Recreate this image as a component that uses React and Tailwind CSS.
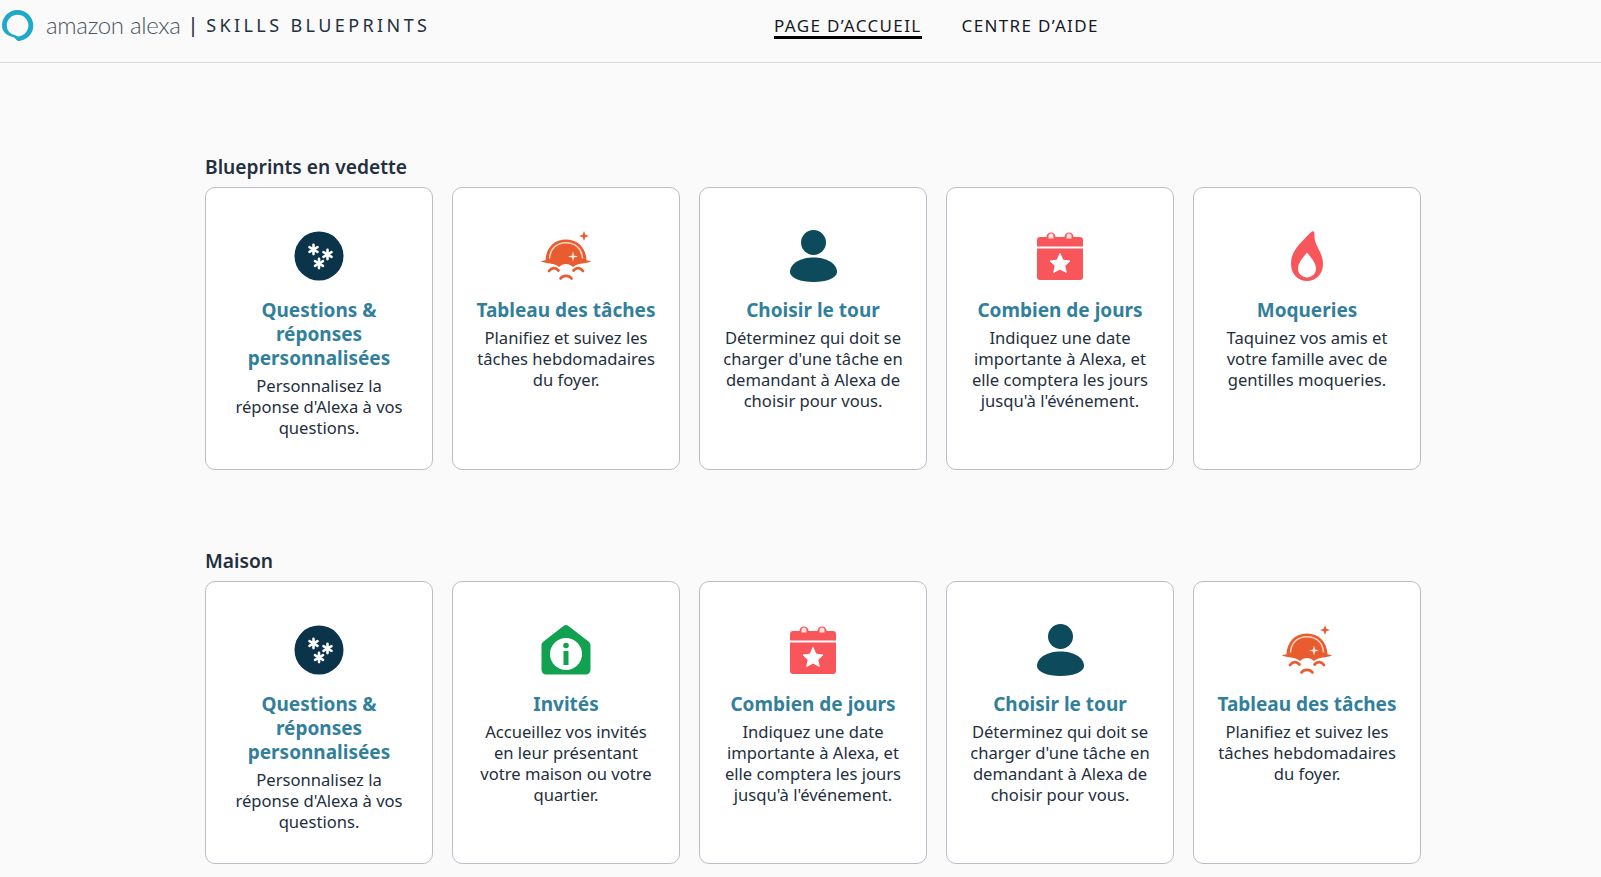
import React from 'react';

const FONT = "font-['Noto_Sans','Open_Sans',sans-serif]";

function AlexaLogo() {
  return (
    <svg width="33" height="33" viewBox="0 0 33 33" className="shrink-0">
      <path
        fillRule="evenodd"
        fill="#1fa9c9"
        d="M16.5 1C25.3 1 32.3 8 32.3 16.6C32.3 24.6 26.2 31.2 18.2 32C17 32.1 16.2 31.4 15.2 30.4L13.2 28.4C7.2 27.4 1 23.6 1 16.6C1 8 7.7 1 16.5 1ZM16.6 5.8C10.6 5.8 5.8 10.6 5.8 16.6C5.8 22 9.6 25.6 14.8 26.4L17.2 27.4C23 27 27.4 22.4 27.4 16.6C27.4 10.6 22.6 5.8 16.6 5.8Z"
      />
    </svg>
  );
}

function QnaIcon() {
  const flake = (x, y, k) => (
    <g key={k} stroke="#fff" strokeWidth="2.6" strokeLinecap="round">
      <path d={`M${x} ${y - 4.6}V${y + 4.6}`} />
      <path d={`M${x - 4} ${y - 2.3}L${x + 4} ${y + 2.3}`} />
      <path d={`M${x - 4} ${y + 2.3}L${x + 4} ${y - 2.3}`} />
    </g>
  );
  return (
    <svg width="50" height="50" viewBox="0 0 50 50">
      <circle cx="25" cy="25" r="24.5" fill="#0b3349" />
      {flake(19.5, 18.5, 'a')}
      {flake(33.5, 23.5, 'b')}
      {flake(25, 32.5, 'c')}
    </svg>
  );
}

function ChoresIcon() {
  const c = '#e85c30';
  return (
    <svg width="52" height="50" viewBox="0 0 52 50">
      <path d="M1 30.500C2 29.600 3.600 29.400 5.500 29.200C6 17 14 8.500 26 8.500C38 8.500 46 17 46.500 29.200C48.400 29.400 50 29.600 51 30.500C48 31.800 45 32 42 32.500C38 33 35 34 33 36C29 32 23 32 19 36C17 34 14 33 10 32.500C7 32 4 31.800 1 30.500Z" fill={c} />
      <path d="M9.500 27.500C10 18 16.500 11.700 26 11.700C35.500 11.700 42 18 42.500 27.500" fill="none" stroke="#fbd3bf" strokeWidth="1.500" />
      <path d="M33 20.500L34.100 24.400L38 25.500L34.100 26.600L33 30.500L31.900 26.600L28 25.500L31.900 24.400Z" fill="#fde8dc" />
      <path d="M44 0L45.300 3.700L49 5L45.300 6.300L44 10L42.700 6.300L39 5L42.700 3.700Z" fill={c} />
      <path d="M9 40C11.500 36.500 15.500 36 18.500 39.500M33.500 39.500C36.500 36 40.500 36.500 43 40M20.500 47.500C23 44 29 44 31.500 47.500" fill="none" stroke={c} strokeWidth="2.700" strokeLinecap="round" />
    </svg>
  );
}

function PersonIcon() {
  return (
    <svg width="50" height="52" viewBox="0 0 50 52">
      <circle cx="25.500" cy="12.500" r="12.500" fill="#0c4a5c" />
      <path d="M2 42C2 33.500 12.500 27.500 25.500 27.500C38.500 27.500 49 33.500 49 42C49 48 38.500 52 25.500 52C12.500 52 2 48 2 42Z" fill="#0c4a5c" />
    </svg>
  );
}

function CalendarIcon() {
  return (
    <svg width="46" height="48" viewBox="0 0 46 48">
      <path d="M3 5H9.500A4.500 4.500 0 0 1 18.500 5H27.500A4.500 4.500 0 0 1 36.500 5H43A3 3 0 0 1 46 8V14.500H0V8A3 3 0 0 1 3 5Z" fill="#f9565c" />
      <path d="M0 16.500H46V45A3 3 0 0 1 43 48H3A3 3 0 0 1 0 45Z" fill="#f9565c" />
      <path d="M11.500 6.500V4A2.500 2.500 0 0 1 16.500 4V6.500M29.500 6.500V4A2.500 2.500 0 0 1 34.500 4V6.500" fill="#fdd" />
      <path d="M23 21.500L26 28.200L33 29L27.800 33.700L29.300 40.500L23 37L16.700 40.500L18.200 33.700L13 29L20 28.200Z" fill="#fff" stroke="#fff" strokeLinejoin="round" />
    </svg>
  );
}

function FlameIcon() {
  return (
    <svg width="34" height="50" viewBox="0 0 34 50">
      <path
        fillRule="evenodd"
        fill="#f9565c"
        d="M22 0.500C23.500 0 24.500 1 24.500 2.500C24 8 25.500 12 28.500 18C31.500 23.500 33 28 33 33C33 43 26 50 17 50C8 50 1 43 1 33C1 24 5 18 11 11.500C15 7.500 18.500 3 22 0.500ZM17 21.500C13 26.500 8 32 8 37.500C8 43 12.500 46.500 17 46.500C21.500 46.500 26 43 26 37.500C26 32 21 26.500 17 21.500Z"
      />
    </svg>
  );
}

function GuestIcon() {
  return (
    <svg width="50" height="50" viewBox="0 0 50 50">
      <path d="M22.500 1C24 -0.200 26 -0.200 27.500 1L47.500 16.500C49 17.700 49.500 18.700 49.500 20.500V44.500C49.500 47.500 47.500 49.500 44.500 49.500H5.500C2.500 49.500 0.500 47.500 0.500 44.500V20.500C0.500 18.700 1 17.700 2.500 16.500Z" fill="#12a150" />
      <circle cx="25" cy="29" r="16" fill="#fff" />
      <circle cx="25" cy="20.500" r="2.800" fill="#12a150" />
      <path d="M22.500 26H27.500V40H22.500Z" fill="#12a150" />
    </svg>
  );
}

const ICONS = {
  qna: QnaIcon,
  chores: ChoresIcon,
  person: PersonIcon,
  calendar: CalendarIcon,
  flame: FlameIcon,
  guest: GuestIcon,
};

const CARDS = {
  qna: {
    icon: 'qna',
    title: 'Questions & réponses personnalisées',
    desc: "Personnalisez la réponse d'Alexa à vos questions.",
  },
  chores: {
    icon: 'chores',
    title: 'Tableau des tâches',
    desc: 'Planifiez et suivez les tâches hebdomadaires du foyer.',
  },
  turn: {
    icon: 'person',
    title: 'Choisir le tour',
    desc: "Déterminez qui doit se charger d'une tâche en demandant à Alexa de choisir pour vous.",
  },
  days: {
    icon: 'calendar',
    title: 'Combien de jours',
    desc: "Indiquez une date importante à Alexa, et elle comptera les jours jusqu'à l'événement.",
  },
  roast: {
    icon: 'flame',
    title: 'Moqueries',
    desc: 'Taquinez vos amis et votre famille avec de gentilles moqueries.',
  },
  guests: {
    icon: 'guest',
    title: 'Invités',
    desc: 'Accueillez vos invités en leur présentant votre maison ou votre quartier.',
  },
};

function Card({ id }) {
  const card = CARDS[id];
  const Icon = ICONS[card.icon];
  return (
    <div className="h-[283px] flex flex-col items-center bg-white border border-[#b9bec7] rounded-[10px] px-[21px] pt-[43px] text-center">
      <div className="h-[50px] flex items-center justify-center">
        <Icon />
      </div>
      <h3 className="mt-[17px] text-[19px] leading-[24px] font-bold text-[#327f9b]">{card.title}</h3>
      <p className="mt-[5px] text-[16.6px] leading-[21px] text-[#232f3e]">{card.desc}</p>
    </div>
  );
}

function Section({ title, ids, className }) {
  return (
    <section className={className}>
      <h2 className="text-[19.2px] leading-[26px] font-semibold text-[#232f3e] mb-[7px]">{title}</h2>
      <div className="grid grid-cols-[repeat(5,228px)] gap-x-[19px]">
        {ids.map((id) => (
          <Card key={id} id={id} />
        ))}
      </div>
    </section>
  );
}

export default function App() {
  return (
    <div className={`h-[877px] overflow-hidden bg-[#fafafa] ${FONT}`}>
      <header className="relative h-[63px] border-b border-[#d5d9e0] flex items-center pb-[12px]">
        <div className="flex items-center pl-[1px] w-[774px]">
          <AlexaLogo />
          <span className="ml-[12px] text-[24px] tracking-[-0.3px] font-light font-['Lato',sans-serif] text-[#4b5563]">amazon alexa</span>
          <span className="ml-[7px] text-[19px] font-medium text-[#232f3e]">|</span>
          <span className="ml-[8px] text-[18px] tracking-[3.4px] text-[#232f3e]">SKILLS BLUEPRINTS</span>
        </div>
        <nav className="mt-[3px] flex items-center gap-10 text-[17px] tracking-[1.35px] text-[#16191f]">
          <a className="border-b-[3px] border-black leading-[21px]">PAGE D’ACCUEIL</a>
          <a className="border-b-[3px] border-transparent leading-[21px]">CENTRE D’AIDE</a>
        </nav>
      </header>
      <main className="pl-[205px]">
        <Section className="pt-[91px]" title="Blueprints en vedette" ids={['qna', 'chores', 'turn', 'days', 'roast']} />
        <Section className="pt-[78px]" title="Maison" ids={['qna', 'guests', 'days', 'turn', 'chores']} />
      </main>
    </div>
  );
}
